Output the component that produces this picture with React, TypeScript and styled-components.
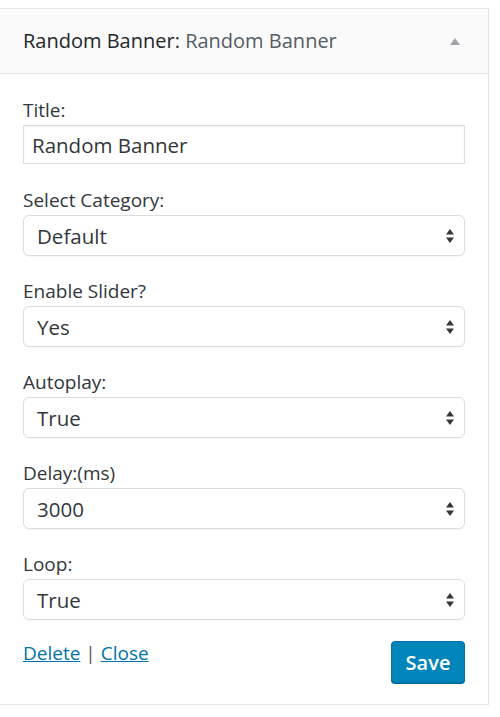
import * as React from "react"
import styled, { createGlobalStyle } from "styled-components"

const Global = createGlobalStyle`
  body {
    margin: 0;
    background: #fff;
    font-family: "Open Sans", "Liberation Sans", sans-serif;
    color: #23282d;
  }
`

const Widget = styled.div`
  margin-top: 8px;
  width: 488px;
  border: 1px solid #e5e5e5;
  border-left: none;
  box-shadow: 0 1px 1px rgba(0, 0, 0, 0.04);
  background: #fff;
`

const Header = styled.div`
  height: 64px;
  display: flex;
  align-items: center;
  justify-content: space-between;
  padding: 0 28px 0 23px;
  background: #fafafa;
  border-bottom: 1px solid #e5e5e5;
`

const HeaderTitle = styled.h3`
  margin: 0;
  font-size: 20px;
  font-weight: 400;
  color: #23282d;
  padding-bottom: 2px;
`

const InWidget = styled.span`
  color: #555d66;
`

const Form = styled.div`
  display: flex;
  flex-direction: column;
  gap: 24px;
  padding: 25px 23px 21px 23px;
`

const Field = styled.div``

const Label = styled.label`
  display: block;
  font-size: 19px;
  line-height: 22px;
  color: #32373c;
  margin-bottom: 4px;
`

const TextInput = styled.input`
  box-sizing: border-box;
  width: 100%;
  height: 39px;
  margin-bottom: 1px;
  padding: 0 8px;
  border: 1px solid #ddd;
  border-radius: 0;
  box-shadow: inset 0 1px 2px rgba(0, 0, 0, 0.07);
  font-family: inherit;
  font-size: 20.5px;
  color: #32373c;
  outline: none;
`

const SelectBox = styled.div`
  box-sizing: border-box;
  height: 41px;
  display: flex;
  align-items: center;
  justify-content: space-between;
  padding: 0 10px 0 13px;
  border: 1px solid #ddd;
  border-radius: 6px;
  box-shadow: 0 1px 1px rgba(0, 0, 0, 0.04);
  font-size: 20.5px;
  color: #32373c;
`

const Footer = styled.div`
  display: flex;
  justify-content: space-between;
  align-items: flex-start;
  margin-top: -3px;
`

const Links = styled.div`
  font-size: 19px;
  line-height: 22px;
  color: #555;
  margin-top: 1px;
`

const Link = styled.a`
  color: #0073aa;
  text-decoration: underline;
`

const SaveButton = styled.button`
  height: 42px;
  width: 74px;
  padding: 0;
  background: #0085ba;
  border: 1px solid #0073aa;
  border-radius: 4px;
  box-shadow: 0 1px 0 #006799;
  color: #fff;
  font-family: inherit;
  font-size: 20px;
  font-weight: 600;
`

const Arrows = () => (
  <svg width="8" height="14" viewBox="0 0 8 14">
    <path d="M4 0 L8 5.5 L0 5.5 Z M0 8.5 L8 8.5 L4 14 Z" fill="#32373c" />
  </svg>
)

const Caret = () => (
  <svg width="10" height="7" viewBox="0 0 10 7">
    <path d="M5 0 L10 7 L0 7 Z" fill="#a0a5aa" />
  </svg>
)

const selects = [
  { label: "Select Category:", value: "Default" },
  { label: "Enable Slider?", value: "Yes" },
  { label: "Autoplay:", value: "True" },
  { label: "Delay:(ms)", value: "3000" },
  { label: "Loop:", value: "True" },
]

export default function App() {
  return (
    <>
      <Global />
      <Widget>
        <Header>
          <HeaderTitle>
            Random Banner: <InWidget>Random Banner</InWidget>
          </HeaderTitle>
          <Caret />
        </Header>
        <Form>
          <Field>
            <Label>Title:</Label>
            <TextInput defaultValue="Random Banner" />
          </Field>
          {selects.map((s) => (
            <Field key={s.label}>
              <Label>{s.label}</Label>
              <SelectBox>
                <span>{s.value}</span>
                <Arrows />
              </SelectBox>
            </Field>
          ))}
          <Footer>
            <Links>
              <Link href="#">Delete</Link> | <Link href="#">Close</Link>
            </Links>
            <SaveButton>Save</SaveButton>
          </Footer>
        </Form>
      </Widget>
    </>
  )
}
